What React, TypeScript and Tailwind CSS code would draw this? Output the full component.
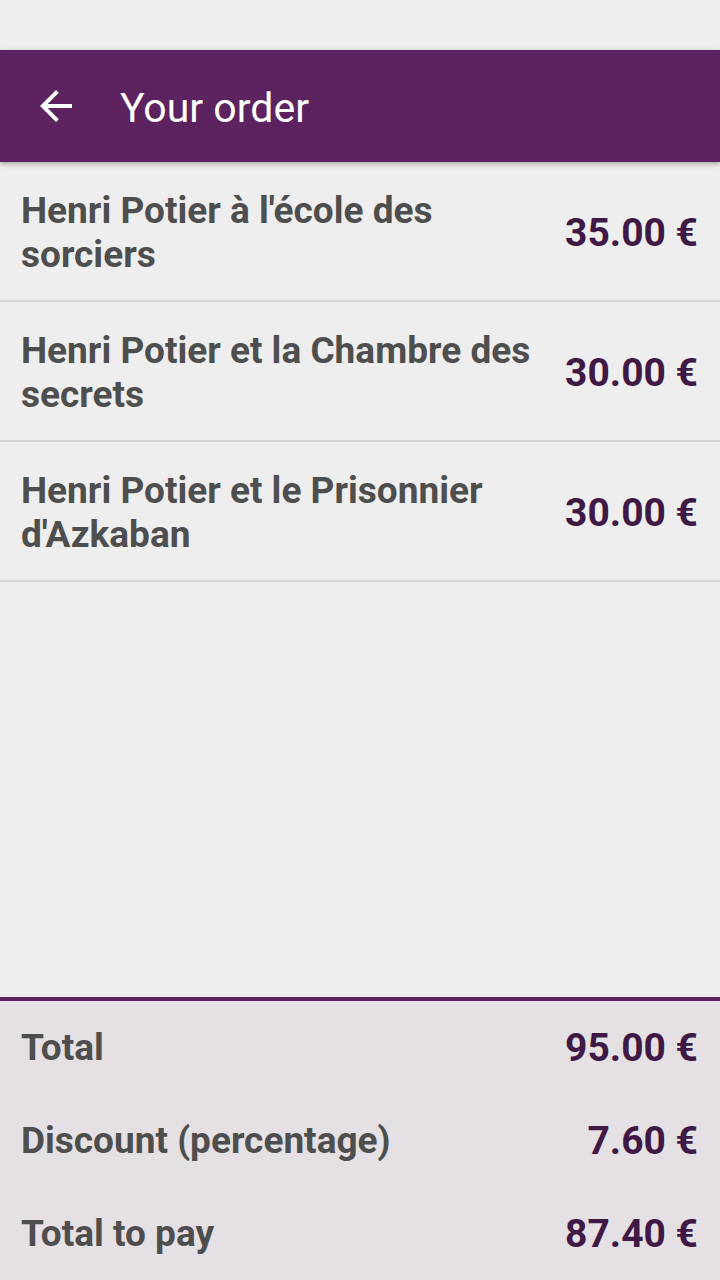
import React from "react";

const items = [
  { title: "Henri Potier à l'école des sorciers", price: "35.00 €" },
  { title: "Henri Potier et la Chambre des secrets", price: "30.00 €" },
  { title: "Henri Potier et le Prisonnier d'Azkaban", price: "30.00 €" },
];

const totals = [
  { label: "Total", value: "95.00 €" },
  { label: "Discount (percentage)", value: "7.60 €" },
  { label: "Total to pay", value: "87.40 €" },
];

export default function App() {
  return (
    <div
      className="h-[1280px] w-[720px] flex flex-col bg-[#eeeeee] overflow-hidden"
      style={{ fontFamily: "Roboto, 'Noto Sans', sans-serif" }}
    >
      <div className="h-[50px] shrink-0" />
      <div className="relative z-10 h-[112px] shrink-0 bg-[#5c2360] flex items-center pl-[32px] shadow-[0_2px_5px_rgba(0,0,0,0.3)]">
        <svg width="48" height="48" viewBox="0 0 24 24" fill="#ffffff">
          <path d="M20 11H7.83l5.59-5.59L12 4l-8 8 8 8 1.41-1.41L7.83 13H20v-2z" />
        </svg>
        <div className="ml-[40px] mt-[4px] text-[41px] leading-none text-white font-normal">Your order</div>
      </div>
      <div className="flex-1 flex flex-col">
        {items.map((it) => (
          <div
            key={it.title}
            className="flex items-center gap-4 pl-[21px] pr-[22px] pt-[27px] pb-[23px] border-b-2 border-[#d6d6d6]"
          >
            <div className="flex-1 text-[37px] leading-[44px] font-bold text-[#4e4e4e]">{it.title}</div>
            <div className="text-[39px] leading-[44px] font-bold text-[#3f1845] whitespace-nowrap">{it.price}</div>
          </div>
        ))}
      </div>
      <div className="shrink-0 border-t-4 border-[#5c2360] bg-[#e4e0e4] flex flex-col">
        {totals.map((t) => (
          <div key={t.label} className="h-[93px] flex items-center justify-between pl-[21px] pr-[22px]">
            <div className="text-[37px] leading-[44px] font-bold text-[#4e4e4e]">{t.label}</div>
            <div className="text-[39px] leading-[44px] font-bold text-[#3f1845]">{t.value}</div>
          </div>
        ))}
      </div>
    </div>
  );
}
